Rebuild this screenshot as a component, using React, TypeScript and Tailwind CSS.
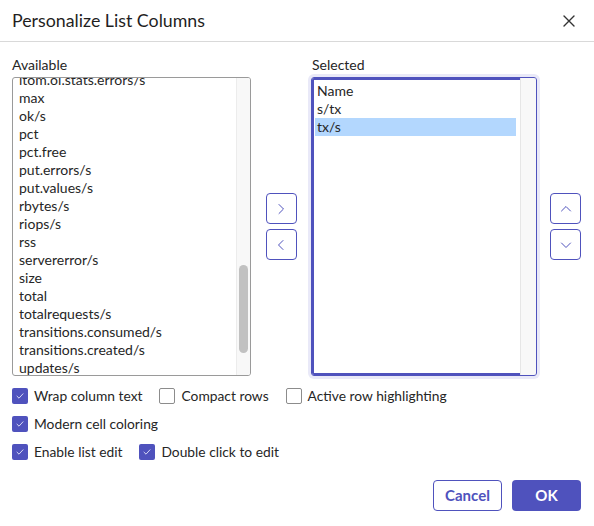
import React from "react";

const AVAILABLE = [
  "itom.oi.stats.errors/s",
  "max",
  "ok/s",
  "pct",
  "pct.free",
  "put.errors/s",
  "put.values/s",
  "rbytes/s",
  "riops/s",
  "rss",
  "servererror/s",
  "size",
  "total",
  "totalrequests/s",
  "transitions.consumed/s",
  "transitions.created/s",
  "updates/s",
];

const SELECTED = ["Name", "s/tx", "tx/s"];

function Chevron({ dir }: { dir: "left" | "right" | "up" | "down" }) {
  const pts = {
    right: "5,2.5 9.5,7 5,11.5",
    left: "9,2.5 4.5,7 9,11.5",
    up: "2.5,9 7,4.5 11.5,9",
    down: "2.5,5 7,9.5 11.5,5",
  }[dir];
  return (
    <svg width="14" height="14" viewBox="0 0 14 14" fill="none">
      <polyline points={pts} stroke="#4f52bd" strokeWidth="1" strokeLinecap="round" strokeLinejoin="round" />
    </svg>
  );
}

function ArrowButton({ dir }: { dir: "left" | "right" | "up" | "down" }) {
  return (
    <button className="w-[31px] h-[31px] rounded-[4px] border border-[#4f52bd] bg-white flex items-center justify-center">
      <Chevron dir={dir} />
    </button>
  );
}

function Check({ label, checked }: { label: string; checked?: boolean }) {
  return (
    <label className="flex items-center gap-[6px]">
      {checked ? (
        <span className="w-[16px] h-[16px] rounded-[2px] bg-[#4f52bd] flex items-center justify-center">
          <svg width="10" height="10" viewBox="0 0 10 10" fill="none">
            <polyline points="2,5.2 4,7.2 8,2.8" stroke="#d6d7f3" strokeWidth="1" strokeLinecap="round" strokeLinejoin="round" />
          </svg>
        </span>
      ) : (
        <span className="w-[16px] h-[16px] rounded-[2px] border border-[#8c8c8c] bg-white" />
      )}
      <span className="text-[13.8px] text-[#262626]">{label}</span>
    </label>
  );
}

export default function App() {
  return (
    <div className="w-[594px] h-[526px] bg-white font-['Lato',sans-serif] text-[#262626] flex flex-col">
      {/* Header */}
      <div className="h-[42px] border-b border-[#d9d9d9] flex items-center justify-between pl-3 pr-[19px]">
        <h1 className="text-[17.8px] text-[#1f1f1f]">Personalize List Columns</h1>
        <svg width="12" height="12" viewBox="0 0 12 12" fill="none">
          <path d="M1 1L11 11M11 1L1 11" stroke="#333" strokeWidth="1.4" strokeLinecap="round" />
        </svg>
      </div>

      {/* Body */}
      <div className="px-3 pt-[14px] flex flex-col">
        <div className="flex">
          {/* Available */}
          <div className="w-[239px] flex flex-col">
            <div className="text-[14px] leading-[18px] mb-[3px]">Available</div>
            <div className="h-[299px] border border-[#9a9a9a] rounded-[3px] flex overflow-hidden">
              <div className="flex-1 overflow-hidden pl-[6px]">
                <div className="mt-[-7px]">
                  {AVAILABLE.map((item) => (
                    <div key={item} className="h-[18px] leading-[18px] text-[14px] whitespace-nowrap">
                      {item}
                    </div>
                  ))}
                </div>
              </div>
              <div className="w-[14px] bg-[#f8f8f8] border-l border-[#ececec] pt-[187px] flex justify-center">
                <div className="w-[9px] h-[88px] rounded-full bg-[#c1c1c1]" />
              </div>
            </div>
          </div>

          {/* Move buttons */}
          <div className="w-[60px] pt-[21px] flex flex-col">
            <div className="h-[299px] flex flex-col items-center justify-center gap-[5px]">
              <ArrowButton dir="right" />
              <ArrowButton dir="left" />
            </div>
          </div>

          {/* Selected */}
          <div className="w-[226px] flex flex-col">
            <div className="text-[14px] leading-[18px] mb-[3px] pl-[1px]">Selected</div>
            <div className="h-[299px] border border-[#4f52bd] rounded-[3px] shadow-[inset_0_0_0_2px_#4f52bd,0_0_0_3px_#e9e9f8] flex overflow-hidden">
              <div className="flex-1 pl-[3px] pr-[4px] pt-[4px]">
                {SELECTED.map((item) => (
                  <div
                    key={item}
                    className={
                      "h-[18px] leading-[18px] text-[14px] pl-[2px] " +
                      (item === "tx/s" ? "bg-[#b3d7fe]" : "")
                    }
                  >
                    {item}
                  </div>
                ))}
              </div>
              <div className="w-[16px] bg-[#f8f8f8] border-l border-[#e6e6e6]" />
            </div>
          </div>

          {/* Order buttons */}
          <div className="flex-1 pt-[21px] pl-[13px]">
            <div className="h-[299px] flex flex-col justify-center gap-[5px]">
              <ArrowButton dir="up" />
              <ArrowButton dir="down" />
            </div>
          </div>
        </div>

        {/* Options */}
        <div className="mt-[6px] flex flex-col">
          <div className="h-[28px] flex items-center gap-[17px]">
            <Check label="Wrap column text" checked />
            <Check label="Compact rows" />
            <Check label="Active row highlighting" />
          </div>
          <div className="h-[28px] flex items-center gap-[17px]">
            <Check label="Modern cell coloring" checked />
          </div>
          <div className="h-[28px] flex items-center gap-[17px]">
            <Check label="Enable list edit" checked />
            <Check label="Double click to edit" checked />
          </div>
        </div>

        {/* Footer */}
        <div className="mt-[14px] flex justify-end gap-[10px] pr-[1px]">
          <button className="w-[69px] h-[31px] rounded-[4px] border border-[#4f52bd] bg-white text-[#4f52bd] text-[15px] font-bold">
            Cancel
          </button>
          <button className="w-[69px] h-[31px] rounded-[4px] bg-[#4f52bd] text-white text-[15px] font-bold">
            OK
          </button>
        </div>
      </div>
    </div>
  );
}
